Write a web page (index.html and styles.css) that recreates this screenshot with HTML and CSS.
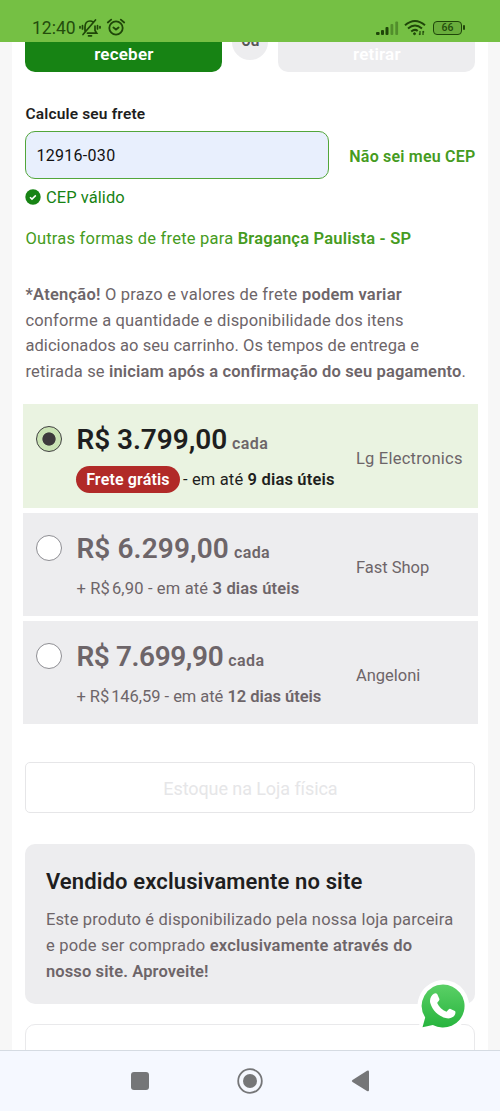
FILE: index.html
```html
<!DOCTYPE html>
<html lang="pt-BR">
<head>
<meta charset="utf-8">
<title>Calcule seu frete</title>
<link rel="stylesheet" href="styles.css">
</head>
<body>
<div class="screen">
  <header class="status">
    <span class="clock">12:40</span>
    <svg class="bell" width="22" height="20" viewBox="0 0 22 20" fill="none" stroke="#1f4609" stroke-width="1.700" stroke-linecap="round"><path d="M6 13V9c0-4 2-6 5-6 1.200 0 2.300.400 3.200 1.200M16 8v4.500l1.700 2.700H8.500M9.500 17.800h3M4 16.500 16.500 2M3.500 7.500v3.500M1 8.500v1.500M18.500 7.500v3.500M21 8.500v1.500"/></svg>
    <svg class="alarm" width="20" height="19" viewBox="0 0 20 19" fill="none" stroke="#1f4609" stroke-width="1.800" stroke-linecap="round"><circle cx="10" cy="10" r="6.700"/><path d="m7.400 9.500 2.600 2 2.600-2M1.800 4.500 5.200 1.600M18.200 4.500l-3.400-2.900"/></svg>
    <svg class="signal" width="24" height="16" viewBox="0 0 24 16" fill="#1f4609"><rect x="0" y="12" width="3.600" height="3" rx="1"/><rect x="5" y="10" width="3" height="5" rx="1"/><rect x="9.500" y="7" width="3" height="8" rx="1"/><g opacity=".4"><rect x="14.500" y="4" width="2.800" height="11" rx="1"/><rect x="19.300" y="1.500" width="2.800" height="13.500" rx="1"/></g></svg>
    <svg class="wifi" width="22" height="17" viewBox="0 0 22 17" fill="none" stroke="#1f4609" stroke-width="2"><path d="M1 6.200q10-8.500 20 0M4 9.500q7-6 14 0M7.200 12.500q3.800-3 6.500-.5"/><circle cx="10.500" cy="14.700" r="1" fill="#1f4609" stroke-width="1"/><path d="M16 12v4M19 12v4M15 14.700l1 1.200M20 13.300l-1-1.200" stroke-width="1.200"/></svg>
    <span class="battery">66</span>
  </header>
  <main class="page">
    <div class="card">
      <div class="modes">
        <div class="mode mode-on"><span>receber</span></div>
        <div class="or"><span>ou</span></div>
        <div class="mode mode-off"><span>retirar</span></div>
      </div>
      <label class="label"><span>Calcule seu frete</span></label>
      <div class="zip">
        <div class="field"><span>12916-030</span></div>
        <a class="help"><span>Não sei meu CEP</span></a>
      </div>
      <div class="valid">
        <svg width="16" height="16" viewBox="0 0 16 16"><circle cx="8" cy="8" r="7.700" fill="#178314"/><path d="m5 8.200 2 1.900 3.800-3.700" fill="none" stroke="#fff" stroke-width="1.500"/></svg>
        <span>CEP válido</span>
      </div>
      <p class="other"><span>Outras formas de frete para <b>Bragança Paulista - SP</b></span></p>
      <p class="note">
        <span class="n1"><b>*Atenção!</b> O prazo e valores de frete <b>podem variar</b></span><br>
        <span class="n2">conforme a quantidade e disponibilidade dos itens</span><br>
        <span class="n3">adicionados ao seu carrinho. Os tempos de entrega e</span><br>
        <span class="n4">retirada se <b>iniciam após a confirmação do seu pagamento</b>.</span>
      </p>
      <div class="offers">
        <div class="offer selected">
          <i class="radio"></i>
          <div class="info">
            <div class="price"><strong>R$ 3.799,00</strong><small>cada</small></div>
            <div class="term"><span class="badge"><span>Frete grátis</span></span><span class="t1">- em até <b>9 dias úteis</b></span></div>
          </div>
          <div class="seller"><span class="s1">Lg Electronics</span></div>
        </div>
        <div class="offer">
          <i class="radio"></i>
          <div class="info">
            <div class="price"><strong class="p2">R$ 6.299,00</strong><small>cada</small></div>
            <div class="term"><span class="t2">+ R$<i class="thin"></i>6,90 - em até <b>3 dias úteis</b></span></div>
          </div>
          <div class="seller"><span>Fast Shop</span></div>
        </div>
        <div class="offer">
          <i class="radio"></i>
          <div class="info">
            <div class="price"><strong class="p3">R$ 7.699,90</strong><small>cada</small></div>
            <div class="term"><span class="t3">+ R$<i class="thin"></i>146,59 - em até <b>12 dias úteis</b></span></div>
          </div>
          <div class="seller"><span>Angeloni</span></div>
        </div>
      </div>
      <div class="stock"><span>Estoque na Loja física</span></div>
      <section class="exclusive">
        <h2><span>Vendido exclusivamente no site</span></h2>
        <p>
          <span class="e1">Este produto é disponibilizado pela nossa loja parceira</span><br>
          <span class="e2">e pode ser comprado <b>exclusivamente através do</b></span><br>
          <span class="e3"><b>nosso site. Aproveite!</b></span>
        </p>
      </section>
      <div class="next"></div>
    </div>
  </main>
  <svg class="whatsapp" width="52" height="52" viewBox="0 0 52 52">
    <defs><linearGradient id="wa" x1="0" y1="0" x2="0" y2="1"><stop offset="0" stop-color="#5bd066"/><stop offset="1" stop-color="#27b43e"/></linearGradient></defs>
    <path d="M26 0a26 26 0 1 1-12 49L0 52 4 39A26 26 0 0 1 26 0Z" fill="#fff"/>
    <path d="M26 4.500a21.500 21.500 0 1 1-10.200 40.400L5.500 47.200l2.700-9.600A21.500 21.500 0 0 1 26 4.500Z" fill="url(#wa)"/>
    <path d="M16.800 13.800c1.200-.8 2.700-.8 3.500.5l2.100 4.700c.4 1.200-1.700 3-2.200 3.900 1.800 4.100 5 7 9.300 8.800 1-.5 2.300-3.200 3.500-2.900l4.900 2.300c1 .6.500 2.900-.3 4.100-1.400 2.100-5 3.600-7.700 3.100C21.500 36.700 15.700 30.800 13.300 23c-1-3.300.7-7.500 3.500-9.200Z" fill="#fff"/>
  </svg>
  <footer class="nav">
    <svg width="18" height="18" viewBox="0 0 18 18"><rect width="18" height="18" rx="3" fill="#757678"/></svg>
    <svg width="26" height="26" viewBox="0 0 26 26"><circle cx="13" cy="13" r="11.800" fill="none" stroke="#757678" stroke-width="1.800"/><circle cx="13" cy="13" r="7" fill="#757678"/></svg>
    <svg width="18" height="22" viewBox="0 0 18 22"><path d="M1.500 10 16 .8Q18 0 18 2v18q0 2-2 1L1.500 12q-1.500-1 0-2Z" fill="#757678"/></svg>
  </footer>
</div>
</body>
</html>
```
FILE: styles.css
```css
* { box-sizing: border-box; }
body { margin: 0; font-family: Roboto, "Liberation Sans", sans-serif; font-size: 16.500px; color: #6d6569; }
b { font-weight: 600; }
p, h2 { margin: 0; }
span { white-space: nowrap; }
svg { display: block; flex: none; }
.screen { position: relative; width: 500px; height: 1111px; display: flex; flex-direction: column; overflow: hidden; }
.status { flex: none; height: 42px; background: #75c044; display: flex; align-items: center; padding: 13px 35px 0 32px; color: #244d0c; }
.clock { font-size: 17.500px; width: 47px; }
.alarm { margin-left: 5px; }
.signal { margin-left: auto; }
.wifi { margin: 0 7px 0 4px; }
.battery { position: relative; width: 29px; height: 14px; border: 1.500px solid #1f4609; border-radius: 4px; background: #69ad3c; font-size: 10.500px; line-height: 12px; text-align: center; font-weight: 500; margin-right: 3px; }
.battery::after { content: ""; position: absolute; right: -4px; top: 3px; width: 2px; height: 5px; border-radius: 1px; background: #1f4609; }
.page { flex: 1; min-height: 0; background: #f7f7f7; padding: 0 12px; overflow: hidden; }
.card { background: #fff; height: 1100px; padding: 0 12.600px 0 13.400px; }
.modes { display: flex; height: 30px; justify-content: space-between; }
.mode { width: 197px; height: 30px; border-radius: 0 0 10px 10px; text-align: center; font-size: 17px; font-weight: 600; line-height: 25px; color: #fff; letter-spacing: .2px; }
.mode-on { background: #178314; }
.mode-off { background: #ededef; }
.or { height: 18px; width: 36px; border-radius: 0 0 18px 18px; background: #ededef; color: #555; font-size: 16px; font-weight: 600; text-align: center; overflow: hidden; }
.or span { display: block; margin-top: -11px; line-height: 20px; }
.label { display: block; margin-top: 32px; height: 27px; font-size: 15.500px; line-height: 21px; font-weight: 600; color: #1e1e20; letter-spacing: .17px; }
.zip { display: flex; justify-content: space-between; align-items: center; height: 48px; font-size: 16px; }
.field { width: 304px; height: 48px; border: 1px solid #52a63b; border-radius: 10px; background: #e8effd; color: #111; padding-left: 10px; line-height: 47px; letter-spacing: .3px; }
.help { color: #459b21; font-weight: 600; padding-top: 3px; letter-spacing: .2px; }
.valid { display: flex; gap: 4.500px; align-items: center; height: 22px; margin-top: 7px; color: #178314; letter-spacing: .07px; }
.other { margin-top: 18px; line-height: 26px; color: #459b21; letter-spacing: .21px; }
.note { margin-top: 30px; line-height: 25.600px; }
.n1 { letter-spacing: .23px; }
.n2 { letter-spacing: .17px; }
.n3 { letter-spacing: .07px; }
.n4 { letter-spacing: .17px; }
.offers { margin: 20px -2.500px 0; display: flex; flex-direction: column; gap: 5px; }
.offer { height: 103px; background: #ededef; display: flex; align-items: flex-start; padding: 1px 0 0 13px; }
.selected { height: 104px; background: #eaf3e1; }
.radio { flex: none; width: 26px; height: 26px; border-radius: 50%; border: 1px solid #8e8e93; background: #fff; margin-top: 20.500px; }
.selected .radio { border-color: #3f3f3f; background: radial-gradient(circle, #3d3a3b 6.200px, #cae3b4 7px); }
.info { flex: none; width: 293px; padding: 18px 0 0 14.500px; }
.price { display: flex; align-items: baseline; gap: 5px; height: 34px; line-height: 34px; }
.price strong { font-size: 28px; font-weight: 600; letter-spacing: -.05px; }
.price .p2 { letter-spacing: .12px; }
.price .p3 { letter-spacing: -.4px; }
.price small { font-size: 16px; font-weight: 600; letter-spacing: .4px; }
.selected strong, .selected .term { color: #1e1e20; }
.term { display: flex; align-items: center; gap: 3px; height: 27px; margin-top: 9px; }
.badge { width: 104px; height: 27px; margin-left: -.5px; border-radius: 14px; background: #b12a28; color: #fff; font-size: 16px; font-weight: 600; line-height: 27px; text-align: center; letter-spacing: .15px; }
.t1 { letter-spacing: .17px; }
.t2 { letter-spacing: .16px; }
.t3 { letter-spacing: -.04px; }
.s1 { letter-spacing: .23px; }
.thin { display: inline-block; width: 2px; }
.seller { padding-top: 43px; line-height: 22px; margin-left: 1px; }
.stock { height: 51px; margin-top: 38px; border: 1px solid #e6e6e8; border-radius: 5px; text-align: center; line-height: 52px; font-size: 18px; color: #e6e6e8; letter-spacing: -.08px; }
.exclusive { margin-top: 30.400px; height: 160px; border-radius: 10px; background: #ededef; padding: 23px 20.500px; }
.exclusive h2 { font-size: 22px; line-height: 30px; font-weight: 600; color: #1e1e20; letter-spacing: .13px; }
.exclusive p { margin-top: 10px; line-height: 26px; }
.e1 { letter-spacing: .16px; }
.e2 { letter-spacing: .22px; }
.e3 { letter-spacing: .12px; }
.next { height: 60px; margin-top: 20.500px; border: 1px solid #e9e9eb; border-radius: 10px; }
.whatsapp { position: absolute; left: 417px; top: 980px; }
.nav { flex: none; height: 61px; border-top: 1px solid #d5dbe2; background: #f5f8ff; display: flex; align-items: center; justify-content: center; gap: 88px; }
```
